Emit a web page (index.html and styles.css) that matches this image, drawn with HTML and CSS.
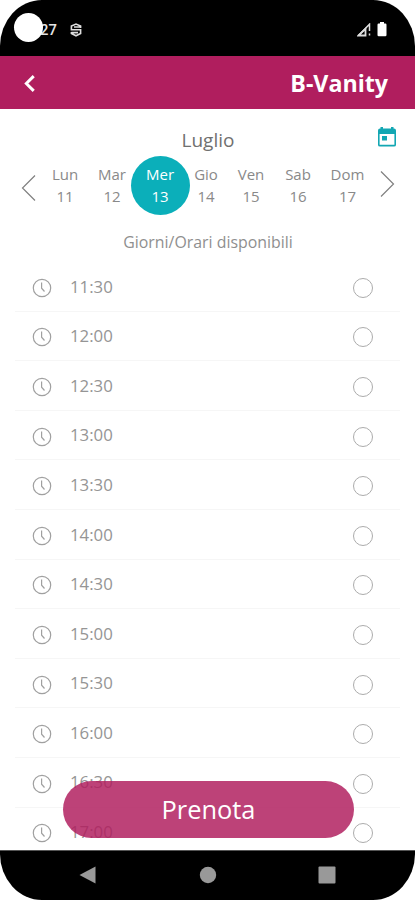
FILE: index.html
```html
<!DOCTYPE html>
<html lang="it">
<head>
<meta charset="utf-8">
<title>B-Vanity</title>
<link rel="stylesheet" href="styles.css">
</head>
<body>
<svg class="defs" aria-hidden="true">
  <symbol id="clock" viewBox="0 0 20 20"><circle cx="10" cy="10" r="8.7"/><path d="M9.6 4.6V10.2L12.5 13.5"/></symbol>
</svg>
<div class="phone">
  <div class="status">
    <span class="camera"></span>
    <span class="time">27</span>
    <svg class="shield" viewBox="0 0 12 16"><path d="M10.6 6V4L6 2 1.4 4V7.8H10.6V11.5L6 13.8 1.4 11.5V10M4 5H10.6M1.4 10.6H8"/></svg>
    <svg class="signal" viewBox="0 0 14 14"><path d="M1.5 12.5L12.5 1.2V8M12.5 10.5V12.5" fill="none" stroke="#ddd" stroke-width="1.5"/><path d="M1.5 12.5L8.5 5.8V12.5Z" fill="none" stroke="#ddd" stroke-width="1.8"/></svg>
    <svg class="battery" viewBox="0 0 10 15"><path d="M3 0H7V1.5H8.3Q9.5 1.5 9.5 2.8V13Q9.5 14.3 8.3 14.3H1.7Q.5 14.3 .5 13V2.8Q.5 1.5 1.7 1.5H3Z" fill="#fff"/></svg>
  </div>
  <header class="bar">
    <svg class="back" viewBox="0 0 12 18"><path d="M10 2L3 9L10 16"/></svg>
    <h1>B-Vanity</h1>
  </header>
  <main>
    <div class="month">
      <span>Luglio</span>
      <svg class="calendar" viewBox="0 0 18 20"><path fill-rule="evenodd" d="M2.5 0H5V1.5H13V0H15.5V1.5H16Q18 1.5 18 3.5V18Q18 19.5 16 19.5H2Q0 19.5 0 18V3.5Q0 1.5 2 1.5H2.5ZM1.6 7V17.8H16.4V7ZM4 9H9V13.5H4Z"/></svg>
    </div>
    <div class="week">
      <svg class="arrow prev" viewBox="0 0 15 28"><path d="M14 1.5L1.5 14L14 26.5"/></svg>
      <div class="day"><span>Lun</span><span>11</span></div>
      <div class="day"><span>Mar</span><span>12</span></div>
      <div class="day selected"><span>Mer</span><span>13</span></div>
      <div class="day"><span>Gio</span><span>14</span></div>
      <div class="day"><span>Ven</span><span>15</span></div>
      <div class="day"><span>Sab</span><span>16</span></div>
      <div class="day"><span>Dom</span><span>17</span></div>
      <svg class="arrow next" viewBox="0 0 15 28"><path d="M1 1.5L13.5 14L1 26.5"/></svg>
    </div>
    <h2>Giorni/Orari disponibili</h2>
    <ul class="slots">
      <li><svg><use href="#clock"/></svg><span>11:30</span><i></i></li>
      <li><svg><use href="#clock"/></svg><span>12:00</span><i></i></li>
      <li><svg><use href="#clock"/></svg><span>12:30</span><i></i></li>
      <li><svg><use href="#clock"/></svg><span>13:00</span><i></i></li>
      <li><svg><use href="#clock"/></svg><span>13:30</span><i></i></li>
      <li><svg><use href="#clock"/></svg><span>14:00</span><i></i></li>
      <li><svg><use href="#clock"/></svg><span>14:30</span><i></i></li>
      <li><svg><use href="#clock"/></svg><span>15:00</span><i></i></li>
      <li><svg><use href="#clock"/></svg><span>15:30</span><i></i></li>
      <li><svg><use href="#clock"/></svg><span>16:00</span><i></i></li>
      <li><svg><use href="#clock"/></svg><span>16:30</span><i></i></li>
      <li><svg><use href="#clock"/></svg><span>17:00</span><i></i></li>
    </ul>
    <button class="book">Prenota</button>
  </main>
  <nav>
    <svg viewBox="0 0 18 18"><path d="M.5 9L16.5 .6V17.4Z"/></svg>
    <svg viewBox="0 0 18 18"><circle cx="9" cy="9" r="8.2"/></svg>
    <svg viewBox="0 0 18 18"><rect x=".5" y=".5" width="17" height="17" rx="1"/></svg>
  </nav>
</div>
</body>
</html>
```
FILE: styles.css
```css
* { box-sizing: border-box; }
body {
  margin: 0;
  background: #fff;
  font-family: "Open Sans", "Noto Sans", sans-serif;
  color: #898989;
}
svg { display: block; flex: none; }
.defs { position: absolute; width: 0; height: 0; }
.phone {
  width: 415px;
  height: 900px;
  display: flex;
  flex-direction: column;
  overflow: hidden;
  border-radius: 42px / 46px;
}
.status {
  height: 56px;
  flex: none;
  display: flex;
  align-items: center;
  padding: 3px 28px 0 14px;
  background: #000;
}
.camera {
  width: 29px;
  height: 29px;
  margin-top: -5px;
  border-radius: 50%;
  background: #fff;
  z-index: 1;
}
.time {
  margin-left: -3px;
  font: 500 14.8px/20px Roboto, sans-serif;
  color: #e4e4e4;
}
.shield {
  width: 12px;
  height: 16px;
  margin-left: 13px;
  fill: none;
  stroke: #ddd;
  stroke-width: 1.6;
}
.signal { width: 14px; height: 14px; margin: 1px 0 0 auto; }
.battery { width: 10px; height: 15px; margin-left: 6px; }
.bar {
  height: 52.5px;
  flex: none;
  display: flex;
  align-items: center;
  justify-content: space-between;
  padding: 0 27px 0 23px;
  background: #b01e5e;
}
.back {
  width: 13px;
  height: 19px;
  margin-top: 2px;
  fill: none;
  stroke: #fff;
  stroke-width: 2.8;
}
h1 {
  margin: 1px 0 0;
  font-size: 23.2px;
  line-height: 32px;
  font-weight: 700;
  color: #fff;
}
main {
  flex: 1;
  min-height: 0;
  position: relative;
  overflow: hidden;
  background: #fff;
}
.month {
  height: 47.5px;
  padding: 17px 19px 0 38px;
  display: grid;
  grid-template-columns: 1fr 18px;
  font-size: 19px;
  line-height: 28px;
  color: #707070;
  text-align: center;
}
.calendar { width: 18px; height: 20px; margin-top: 1px; fill: #13a7b3; }
.week {
  height: 59px;
  padding-left: 21px;
  display: grid;
  grid-template-columns: 21px 46px 48px 48px 44px 46px 48px 51px 22px;
}
.day {
  display: flex;
  flex-direction: column;
  align-items: center;
  padding-top: 6.5px;
  font-size: 15px;
  line-height: 22.5px;
}
.selected {
  width: 59px;
  height: 59px;
  justify-self: center;
  border-radius: 50%;
  background: #0bafba;
  color: #fff;
  font-weight: 500;
}
.arrow { width: 15px; height: 28px; fill: none; stroke: #808080; stroke-width: 1.2; }
.prev { margin-top: 18px; }
.next { margin: 14px 0 0 7px; }
h2 {
  margin: 0;
  height: 47px;
  padding: 15px 0 0 1px;
  font-size: 15.9px;
  line-height: 24px;
  font-weight: 400;
  text-align: center;
  color: #8f8f8f;
}
.slots { list-style: none; margin: 0 15px; padding: 0; }
.slots li {
  height: 49.6px;
  display: flex;
  align-items: center;
  padding: 3px 27px 0 17px;
  border-bottom: 1px solid #f6f6f6;
}
.slots svg { width: 20px; height: 20px; fill: none; stroke: #a0a0a0; stroke-width: 1.2; }
.slots span { margin: -2.5px 0 0 18px; font-size: 16.8px; line-height: 24px; color: #959595; }
.slots i {
  width: 20px;
  height: 20px;
  margin-left: auto;
  border: 1px solid #acacac;
  border-radius: 50%;
}
.book {
  position: absolute;
  left: 63px;
  right: 61px;
  bottom: 12.5px;
  height: 57px;
  padding: 0 0 1px;
  border: 0;
  border-radius: 29px;
  background: rgba(176, 30, 94, .84);
  font: 400 25.4px/32px "Open Sans", sans-serif;
  color: #fff;
}
nav {
  height: 50px;
  flex: none;
  display: flex;
  justify-content: space-between;
  padding: 15px 79px 0;
  background: #000;
  border-top: 1px solid #555;
}
nav svg { width: 18px; height: 18px; fill: #999; }
```
